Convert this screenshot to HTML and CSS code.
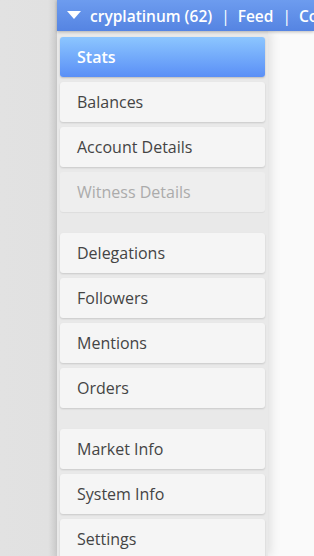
FILE: index.html
```html
<!DOCTYPE html>
<html>
<head>
<meta charset="utf-8">
<link rel="stylesheet" href="styles.css">
</head>
<body>
<div class="page">
  <div class="gutter"></div>
  <div class="main">
    <div class="topbar">
      <svg class="caret" width="14" height="8" viewBox="0 0 14 8"><path d="M0 0 H14 L7 8 Z" fill="#fff"/></svg>
      <span class="crumb">cryplatinum (62)</span>
      <span class="sep">|</span>
      <span class="crumb">Feed</span>
      <span class="sep">|</span>
      <span class="crumb">Communities</span>
    </div>
    <div class="body">
      <nav class="menu">
        <div class="item active">Stats</div>
        <div class="item">Balances</div>
        <div class="item">Account Details</div>
        <div class="item disabled">Witness Details</div>
        <div class="spacer"></div>
        <div class="item">Delegations</div>
        <div class="item">Followers</div>
        <div class="item">Mentions</div>
        <div class="item">Orders</div>
        <div class="spacer"></div>
        <div class="item">Market Info</div>
        <div class="item">System Info</div>
        <div class="item">Settings</div>
      </nav>
      <div class="content"></div>
    </div>
  </div>
</div>
</body>
</html>
```

FILE: styles.css
```css
html, body {
  margin: 0;
  padding: 0;
  height: 100%;
  overflow: hidden;
}
body {
  font-family: "Open Sans", "DejaVu Sans", sans-serif;
  background: #e1e1e1;
}
.page {
  display: flex;
  height: 556px;
}
.gutter {
  width: 57px;
  flex: none;
  background: linear-gradient(to right, #e2e2e2 0, #e1e1e1 48px, #d6d6d6 54px, #cfcfcf 57px);
}
.main {
  flex: 1;
  display: flex;
  flex-direction: column;
  min-width: 0;
  background: #fafafa;
}
.topbar {
  height: 31px;
  flex: none;
  display: flex;
  align-items: center;
  white-space: nowrap;
  overflow: hidden;
  padding-left: 10px;
  background: linear-gradient(to bottom, #6d9cef, #5584e2);
  box-shadow: 0 1px 3px rgba(0,0,0,0.25);
  color: #fff;
  font-size: 15.5px;
  font-weight: 600;
  position: relative;
  z-index: 2;
}
.topbar > * {
  flex: none;
}
.caret {
  margin-right: 9px;
  margin-top: -1px;
}
.sep {
  margin: 0 8px 0 9px;
  font-weight: 400;
}
.body {
  flex: 1;
  display: flex;
  min-height: 0;
}
.menu {
  width: 205px;
  flex: none;
  padding: 6px 3px 0 3px;
  background: #e9e9e9;
  box-shadow: 2px 0 10px rgba(0,0,0,0.12);
  display: flex;
  flex-direction: column;
  gap: 5px;
  position: relative;
  z-index: 1;
}
.item {
  height: 40px;
  flex: none;
  box-sizing: border-box;
  display: flex;
  align-items: center;
  padding-left: 17px;
  background: #f5f5f5;
  border-radius: 3px;
  box-shadow: 0 1px 2px rgba(0,0,0,0.14);
  color: #444;
  font-size: 16px;
}
.item.active {
  background: linear-gradient(to bottom, #8cc6ff, #5a8ff6);
  color: #fff;
  font-weight: 600;
  box-shadow: 0 1px 2px rgba(0,0,0,0.2);
}
.item.disabled {
  background: #eeeeee;
  color: #ababab;
  box-shadow: 0 1px 1px rgba(0,0,0,0.05);
}
.spacer {
  height: 11px;
  flex: none;
}
.content {
  flex: 1;
  background: #fafafa;
}
```
